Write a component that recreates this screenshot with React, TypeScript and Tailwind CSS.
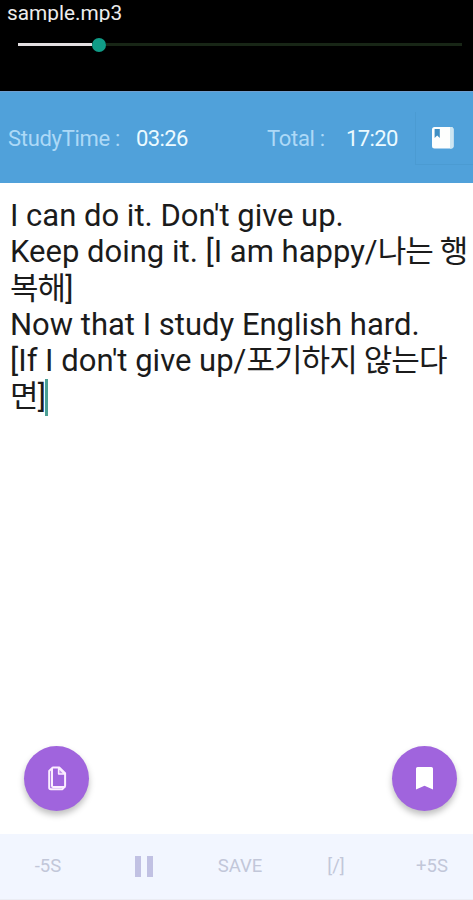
import React, { useState } from 'react';

// Lines of the study note, wrapped as the editor shows them.
// Each line is a latin part, a hangul part and a closing part
const noteLines = [
    ["I can do it. Don't give up.", '', ''],
    ['Keep doing it. [I am happy/', '나는 행', ''],
    ['', '복해', ']'],
    ['Now that I study English hard.', '', ''],
    ["[If I don't give up/", '포기하지 않는다', ''],
    ['', '면', ']']
];

const BookIcon = () => (
    <svg width="22" height="22" viewBox="0 0 22 22">
        <rect x="0" y="0" width="21.5" height="21.5" rx="2.5" fill="#fdfefd" />
        <path d="M18 0h1a2.5 2.5 0 0 1 2.5 2.5V19a2.5 2.5 0 0 1-2.5 2.5h-1z" fill="#cde6f2" />
        <path d="M2.6 2h5.2v9L5.2 8.6 2.6 11z" fill="#3f8fc4" />
    </svg>
);

const PagesIcon = () => (
    <svg width="20" height="25" viewBox="0 0 20 25" fill="none" stroke="#fbeeff" strokeWidth="2" strokeLinejoin="round">
        <path d="M6 1.6h6.5l5.6 5.6v12.6q0 1.2-1.2 1.2H6q-1 0-1-1V2.6q0-1 1-1z" />
        <path d="M11.6 2v6h6z" fill="#fbeeff" fillOpacity="0.35" strokeWidth="1.5" />
        <path d="M4.5 2.6 2.2 5v16.6q0 1.6 1.6 1.6h11.7l2.3-2.6" />
    </svg>
);

const BookmarkIcon = () => (
    <svg width="17" height="23" viewBox="0 0 17 23" fill="#ffffff">
        <path d="M1.6 0h13.8q1.6 0 1.6 1.6V22.5L8.5 18.7 0 22.5V1.6Q0 0 1.6 0z" />
    </svg>
);

const PauseIcon = () => (
    <svg width="18" height="21" viewBox="0 0 18 21" fill="#c1c1e3">
        <rect x="0" y="0" width="6" height="21" />
        <rect x="12" y="0" width="6" height="21" />
    </svg>
);

interface RoundButtonProps {
    label: string;
    children: React.ReactNode;
}

const RoundButton: React.FC<RoundButtonProps> = ({ label, children }) => (
    <button
        aria-label={label}
        className="flex size-[65px] items-center justify-center rounded-full bg-[#a064dd] shadow-[0_4px_6px_rgba(0,0,0,0.25)]"
    >
        {children}
    </button>
);

export default function App() {
    const [progress] = useState(18);

    return (
        <div className="flex h-[900px] w-[473px] flex-col overflow-hidden bg-white font-[Roboto,'Noto_Sans_CJK_KR',sans-serif]">
            {/* File name and seek bar */}
            <header className="h-[91px] shrink-0 bg-black">
                <div className="h-[22px] overflow-hidden pl-[7px] text-[20.8px] leading-[27px] text-[#ededed]">
                    sample.mp3
                </div>
                <div className="mr-[11px] ml-[18px] flex h-[45px] items-center">
                    <div className="h-[3px] bg-[#e3dfe1]" style={{ width: `calc(${progress}% - 6px)` }} />
                    <div className="size-[14px] rounded-full bg-[#109c87]" />
                    <div className="h-[3px] flex-1 bg-[#182616]" />
                </div>
            </header>

            {/* Study time */}
            <section className="flex h-[92px] shrink-0 items-center border-t border-[#6f9fd0] bg-[#50a1da] pt-[2px] text-[22px] leading-none tracking-[-0.3px] whitespace-nowrap">
                <span className="w-[128px] pl-[8px] text-[#add9f7]">StudyTime :</span>
                <span className="w-[139px] pl-[8px] tracking-[-0.6px] text-[#ebfaff]">03:26</span>
                <span className="w-[79px] text-[#add9f7]">Total :</span>
                <span className="w-[69px] tracking-[-0.6px] text-[#ebfaff]">17:20</span>
                <button
                    aria-label="Notes"
                    className="flex h-[53px] flex-1 items-center justify-center border-b border-l border-[#4b9bd2] pr-1"
                >
                    <BookIcon />
                </button>
            </section>

            {/* Note */}
            <main className="flex-1 pt-[15px] pl-[10px] text-[31px] leading-[36.3px] whitespace-nowrap text-[#1b1b1b]">
                {noteLines.map(([latin, hangul, end], i) => (
                    <div key={i} className="flex h-[36.3px] items-center">
                        <span>
                            {latin}
                            <span className="tracking-[-0.9px]">{hangul}</span>
                            {end}
                        </span>
                        {i === noteLines.length - 1 && <span className="-ml-[1px] h-[37px] w-[3px] bg-[#4b9f94]" />}
                    </div>
                ))}
            </main>

            <div className="flex h-[88px] shrink-0 justify-between pr-4 pl-6">
                <RoundButton label="Pages">
                    <PagesIcon />
                </RoundButton>
                <RoundButton label="Bookmark">
                    <BookmarkIcon />
                </RoundButton>
            </div>

            {/* Player controls */}
            <footer className="flex h-[66px] shrink-0 items-center border-b border-[#ebedf4] bg-[#f2f6ff] text-[18.5px] text-[#c2c7d9]">
                <button className="w-24 shrink-0 text-center">-5S</button>
                <button aria-label="Pause" className="flex w-24 shrink-0 justify-center">
                    <PauseIcon />
                </button>
                <button className="w-24 shrink-0 text-center">SAVE</button>
                <button className="w-24 shrink-0 text-center">[/]</button>
                <button className="w-24 shrink-0 text-center">+5S</button>
            </footer>
        </div>
    );
}
